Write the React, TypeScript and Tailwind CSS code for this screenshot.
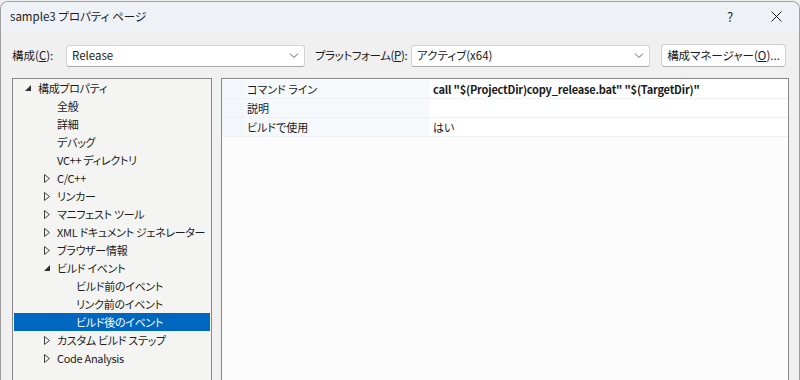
import React from "react";

const font = "font-['Noto_Sans_CJK_JP','Noto_Sans',sans-serif] [font-feature-settings:'palt']";

type Node = { label: string; level: number; arrow?: "open" | "closed"; selected?: boolean };

const nodes: Node[] = [
  { label: "構成プロパティ", level: 0, arrow: "open" },
  { label: "全般", level: 1 },
  { label: "詳細", level: 1 },
  { label: "デバッグ", level: 1 },
  { label: "VC++ ディレクトリ", level: 1 },
  { label: "C/C++", level: 1, arrow: "closed" },
  { label: "リンカー", level: 1, arrow: "closed" },
  { label: "マニフェスト ツール", level: 1, arrow: "closed" },
  { label: "XML ドキュメント ジェネレーター", level: 1, arrow: "closed" },
  { label: "ブラウザー情報", level: 1, arrow: "closed" },
  { label: "ビルド イベント", level: 1, arrow: "open" },
  { label: "ビルド前のイベント", level: 2 },
  { label: "リンク前のイベント", level: 2 },
  { label: "ビルド後のイベント", level: 2, selected: true },
  { label: "カスタム ビルド ステップ", level: 1, arrow: "closed" },
  { label: "Code Analysis", level: 1, arrow: "closed" },
];

const props = [
  { name: "コマンド ライン", value: 'call "$(ProjectDir)copy_release.bat" "$(TargetDir)"', bold: true },
  { name: "説明", value: "" },
  { name: "ビルドで使用", value: "はい" },
];

const Chevron = () => (
  <svg width="10" height="6" viewBox="0 0 10 6" className="shrink-0">
    <path d="M1 0.5 L5 4.5 L9 0.5" fill="none" stroke="#606060" strokeWidth="1" />
  </svg>
);

const Combo = ({ text }: { text: string }) => (
  <div className="flex h-[22px] w-[239px] shrink-0 items-center justify-between rounded-[3px] border border-[#d3d3d3] border-b-[#a8a8a8] bg-white pl-[5px] pr-[5px]">
    <span className="text-[11.5px] text-[#1b1b1b]">{text}</span>
    <Chevron />
  </div>
);

const Arrow = ({ kind }: { kind: "open" | "closed" }) =>
  kind === "open" ? (
    <svg width="6" height="6" viewBox="0 0 6 6">
      <polygon points="0,6 6,6 6,0" fill="#303030" />
    </svg>
  ) : (
    <svg width="6" height="9" viewBox="0 0 6 9">
      <polygon points="0.5,0.5 5.5,4.5 0.5,8.5" fill="none" stroke="#404040" strokeWidth="1" />
    </svg>
  );

export default function App() {
  return (
    <div className={`${font} h-[380px] w-[800px] overflow-hidden bg-[#f0f0f0] text-[11px] text-[#1b1b1b]`}>
      <div className="mt-[1px] flex h-[381px] flex-col overflow-hidden rounded-t-[8px] border border-b-0 border-[#a0a0a0]">
        <div className="flex h-[29px] shrink-0 items-center bg-[#eef2f7] pl-[9px]">
          <span className="flex-1 text-[11.5px] text-[#1b1b1b]">sample3 プロパティ ページ</span>
          <span className="w-[46px] text-center text-[13px] text-[#1b1b1b]">?</span>
          <span className="flex w-[46px] items-center justify-center">
            <svg width="11" height="11" viewBox="0 0 11 11">
              <path d="M0.5 0.5 L10.5 10.5 M10.5 0.5 L0.5 10.5" stroke="#1b1b1b" strokeWidth="1" />
            </svg>
          </span>
        </div>
        <div className="flex h-[47px] shrink-0 items-center whitespace-nowrap pl-[11px] pt-[2px] text-[11.5px]">
          <span className="w-[54px] shrink-0">構成(<u>C</u>):</span>
          <Combo text="Release" />
          <span className="ml-[10px] w-[96px] shrink-0 tracking-[-0.4px]">プラットフォーム(<u>P</u>):</span>
          <Combo text="アクティブ(x64)" />
          <div className="ml-[11px] flex h-[23px] w-[125px] shrink-0 items-center justify-center rounded-[4px] border border-[#d0d0d0] border-b-[#b0b0b0] bg-[#fdfdfd]">
            構成マネージャー(<u>O</u>)...
          </div>
        </div>
        <div className="flex flex-1 gap-[9px] pl-[11px] pr-[10px]">
          <div className="w-[200px] shrink-0 border border-[#888888] bg-[#f4f5f3] px-[1px]">
            {nodes.map((n, i) => (
              <div
                key={i}
                className={`flex h-[18px] items-center whitespace-nowrap tracking-[-0.3px] ${n.selected ? "bg-[#0067c0] text-white" : ""}`}
                style={{ paddingLeft: 11 + n.level * 19 }}
              >
                <span className="flex w-[13px] shrink-0 justify-start">{n.arrow && <Arrow kind={n.arrow} />}</span>
                <span>{n.label}</span>
              </div>
            ))}
          </div>
          <div className="flex-1 border border-[#888888] bg-[#fbfcfb] pt-[1px]">
            {props.map((p, i) => (
              <div key={i} className="flex h-[19px] border-b border-[#edf1f5]">
                <div className="w-[22px] bg-[#f3f6fa]" />
                <div className="flex w-[186px] items-center bg-[#f6f9fc] pl-[3px]">{p.name}</div>
                <div className={`flex flex-1 items-center whitespace-nowrap bg-white pl-[3px] ${p.bold ? "font-bold tracking-[-0.2px]" : ""}`}>
                  {p.value}
                </div>
              </div>
            ))}
          </div>
        </div>
      </div>
    </div>
  );
}
